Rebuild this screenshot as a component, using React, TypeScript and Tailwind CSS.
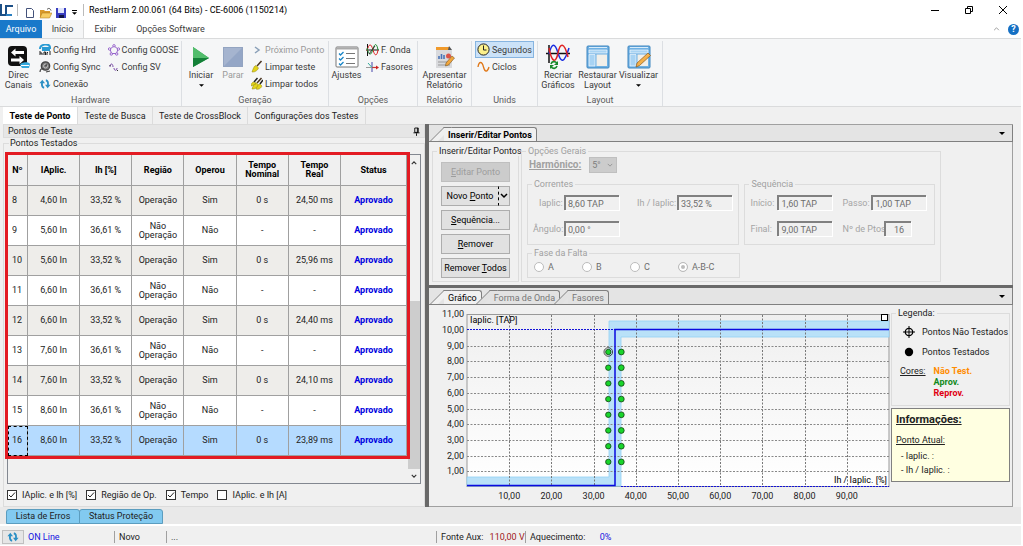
import { useState } from "react";
import type { ReactNode } from "react";
import clsx from "clsx";

const rows = [
  { n: 8, i: "4,60 In", op: true, t: "24,50 ms" },
  { n: 9, i: "5,60 In", op: false, t: "-" },
  { n: 10, i: "5,60 In", op: true, t: "25,96 ms" },
  { n: 11, i: "6,60 In", op: false, t: "-" },
  { n: 12, i: "6,60 In", op: true, t: "24,40 ms" },
  { n: 13, i: "7,60 In", op: false, t: "-" },
  { n: 14, i: "7,60 In", op: true, t: "24,10 ms" },
  { n: 15, i: "8,60 In", op: false, t: "-" },
  { n: 16, i: "8,60 In", op: true, t: "23,89 ms" },
];

function Caret({ className = "w-[5px]" }: { className?: string }) {
  return (
    <svg viewBox="0 0 8 4" className={clsx("h-[3px]", className)}>
      <path d="M0 0h8L4 4z" fill="#000" />
    </svg>
  );
}

/* ---------- Ícones ---------- */

function SyncArrows({ className }: { className?: string }) {
  return (
    <svg viewBox="0 0 14 12" className={className} fill="none" stroke="#2b8fc4" strokeWidth="2.200">
      <path d="M6 10.500C3 10 3 7 3.500 3.500" />
      <path d="M.3 5.200 3.800 1 7 5z" fill="#2b8fc4" stroke="none" />
      <path d="M8 1.500C11 2 11 5 10.500 8.500" />
      <path d="M13.700 6.800 10.200 11 7 7z" fill="#2b8fc4" stroke="none" />
    </svg>
  );
}

function DirecIcon() {
  return (
    <svg viewBox="0 0 24 24" className="w-6 h-6">
      <rect x="1" y="1" width="19" height="20" rx="4" fill="#111" />
      <path d="M4 7.500 8.500 3.500V6H17v3H8.500v2.500zM17 15l-4.500 4v-2.500H4v-3h8.500V11z" fill="#fff" />
      <path d="M13 20c0-3 9-4 10-1l-1 4h-7z" fill="#35a8dc" />
      <path d="M14 20.500h8" stroke="#fff" strokeWidth="1" />
    </svg>
  );
}

function HrdIcon() {
  return (
    <svg viewBox="0 0 12 12" className="w-3 h-3" fill="none">
      <path d="M1 5c0-5 9-6 10-2v1H4v2h7" stroke="#2a9bd3" strokeWidth="2" />
      <path d="M1 7v4M1 9h2v2M5 11V8h1.500v3M8 11V8.500h1M11 7v4" stroke="#222" strokeWidth="1" />
    </svg>
  );
}

function ClockSyncIcon() {
  return (
    <svg viewBox="0 0 12 12" className="w-3 h-3" fill="none" stroke="#444">
      <circle cx="6.500" cy="5" r="4.200" fill="#777" strokeWidth="1.300" />
      <circle cx="6.500" cy="5" r="2" stroke="#ccc" strokeWidth=".8" />
      <path d="M1 11c0-3 2-4 4-3M6.500 5 8 3.500M7 11l4-1" strokeWidth="1.200" />
    </svg>
  );
}

function GooseIcon() {
  return (
    <svg viewBox="0 0 12 12" className="w-3 h-3" fill="none" stroke="#8b55c5" strokeWidth=".9">
      <path d="M6 2 10 5 8.500 9.500h-5L2 5z" />
      <circle cx="6" cy="1.800" r="1.200" fill="#fff" />
      <circle cx="10.400" cy="5" r="1.200" fill="#fff" />
      <circle cx="8.700" cy="10" r="1.200" fill="#fff" />
      <circle cx="3.300" cy="10" r="1.200" fill="#fff" />
      <circle cx="1.600" cy="5" r="1.200" fill="#fff" />
    </svg>
  );
}

function SvIcon() {
  return (
    <svg viewBox="0 0 12 12" className="w-3 h-3" fill="none" stroke="#7a4aa8" strokeWidth="1">
      <path d="M2 6c0-4 3-4 3 0M6 7c0 3 3 3 3 0" />
      <path d="M1.500 4.500h1M9 9.500h1" stroke="#333" />
    </svg>
  );
}

function PlayIcon() {
  return (
    <svg viewBox="0 0 20 22" className="w-5 h-[22px]">
      <path d="M2 1v20l16-9z" fill="#1f9a46" />
      <path d="M2 1v11h16z" fill="#52bd6c" />
      <path d="M2 21l16-9H2z" fill="#148038" />
    </svg>
  );
}

function StopIcon() {
  return (
    <svg viewBox="0 0 20 22" className="w-5 h-[22px]">
      <rect x=".5" y="1.500" width="19" height="19" fill="#a5b4cf" stroke="#93a4c1" />
      <path d="M1 20 19 2v18z" fill="#94a6c6" />
    </svg>
  );
}

function BroomIcon({ twice = false }: { twice?: boolean }) {
  return (
    <svg viewBox="0 0 12 13" className="w-3 h-[13px]" fill="none">
      <path d="M6 6 10.500 1" stroke="#4a3420" strokeWidth="1.500" />
      <path d="M1 12c1-3 2-6 4-6.500L7.500 8C7 10 4 12.500 1 12z" fill="#e3d31a" stroke="#8e8510" strokeWidth=".5" />
      {twice && (
        <>
          <path d="M3 5 6.500 1M9 7l3-4" stroke="#222" strokeWidth="1.500" />
          <path d="M0 9c0-2 1-4 3-4l2 2zM5 12c1-2 2-5 4-5l2 2c-1 2-3 4-6 3z" fill="#e3d31a" stroke="#8e8510" strokeWidth=".5" />
        </>
      )}
    </svg>
  );
}

function AjustesIcon() {
  return (
    <svg viewBox="0 0 24 22" className="w-6 h-[22px]" fill="none">
      <rect x="1" y="1" width="22" height="20" rx="1" fill="#fff" stroke="#777" />
      <path d="M1 2.500h22" stroke="#aaa" strokeWidth="2" />
      <path d="M11 7.500h9M11 12.500h9M11 17.500h9" stroke="#777" strokeWidth="1.200" />
      <path d="m4 7.500 1.500 1.500 3-3M4 12.500l1.500 1.500 3-3M4 17.500 5.500 19l3-3" stroke="#1a86c8" strokeWidth="1.300" />
    </svg>
  );
}

function OndaIcon() {
  return (
    <svg viewBox="0 0 13 12" className="w-[13px] h-3" fill="none" strokeWidth="1">
      <path d="M1.500 0v12M0 6h13" stroke="#111" />
      <path d="M1 7C3-1 5-1 7 6s4 6 5 0" stroke="#d22" />
      <path d="M1 4c2 8 4 8 6 1s4-5 5 1" stroke="#1b8a2c" />
      <path d="M3 10 9 2" stroke="#333" />
    </svg>
  );
}

function FasoresIcon() {
  return (
    <svg viewBox="0 0 13 12" className="w-[13px] h-3" fill="none">
      <path d="M6 11V1" stroke="#44a" />
      <path d="M0 6.500h11" stroke="#999" />
      <path d="M6 6.500h5" stroke="#c33" strokeWidth="1.200" />
      <path d="M10 4.500 13 6.500l-3 2z" fill="#c22" />
      <path d="M6 6.500 2 2" stroke="#3a9" />
    </svg>
  );
}

function ReportIcon() {
  return (
    <svg viewBox="0 0 22 24" className="w-[22px] h-6" fill="none">
      <path d="M2 2h14l2 3v18H2z" fill="#d9dadd" />
      <path d="M2 2h14v3H2z" fill="#f09a2c" />
      <path d="M15 1l3 4h-4z" fill="#555" />
      <path d="M5 14v-3M7.500 14V9M10 14v-4" stroke="#4a74b8" strokeWidth="1.600" />
      <circle cx="14.500" cy="11" r="2.500" fill="#db5449" />
      <path d="M4 17h10M4 20h12" stroke="#999" />
      <path d="m12 18 6-7 2.500 2-6 7-3 1z" fill="#f2a63b" stroke="#7b5520" strokeWidth=".6" />
    </svg>
  );
}

function RecriarIcon() {
  return (
    <svg viewBox="0 0 26 26" className="w-[26px] h-[26px]" fill="none">
      <path d="M4 1v18M1 9.500h24" stroke="#111" strokeWidth="1.500" />
      <path d="M4 10C7-2 10-1 13 9s6 11 11-5" stroke="#1a2ee0" strokeWidth="1.500" />
      <path d="M4 4c3 16 7 15 9 5s6-12 10 4" stroke="#e02323" strokeWidth="1.500" />
      <path d="M6 20c1-3 4-3 6-1M12 22c-1 3-4 3-6 1" stroke="#1b8a2c" strokeWidth="1.600" />
      <path d="M13 17v4h-4zM5 25v-4h4z" fill="#1b8a2c" />
    </svg>
  );
}

function LayoutIcon({ pencil = false }: { pencil?: boolean }) {
  return (
    <svg viewBox="0 0 24 24" className="w-6 h-6" fill="none">
      <rect x="1" y="1" width="22" height="22" rx="1" fill="#6fb1e4" stroke="#3f86bf" />
      <path d="M3 2.500h18" stroke="#d8ecfa" />
      <path d="M3 5h18v3H3zM3 9.500h6V21H3z" fill="#a8d3f3" stroke="#fff" strokeWidth=".6" />
      <path d="M10.500 9.500H21V21H10.500z" fill="#f2efe9" />
      {pencil && <path d="m9 22 1-4L21 8l2.500 2.500-11 10z" fill="#f3b04a" stroke="#8a5a1e" strokeWidth=".7" />}
    </svg>
  );
}

function SegundosIcon() {
  return (
    <svg viewBox="0 0 13 13" className="w-[13px] h-[13px]" fill="none">
      <circle cx="6.500" cy="6.500" r="5.600" fill="#fbf08b" stroke="#222" />
      <path d="M6.500 2.500v4.500h3" stroke="#222" />
    </svg>
  );
}

function CiclosIcon() {
  return (
    <svg viewBox="0 0 13 13" className="w-[13px] h-[13px]" fill="none">
      <path d="M1 7c1-6 4-6 5.500 0s4 5 5.500 0" stroke="#e07818" strokeWidth="1.300" />
    </svg>
  );
}

/* ---------- Faixa de opções ---------- */

function RibbonGroup({ label, className, children }: { label: string; className: string; children: ReactNode }) {
  return (
    <section className={clsx("flex flex-col shrink-0 border-r border-[#dcdfe3]", className)}>
      <div className="flex flex-1 items-start">{children}</div>
      <div className="text-center leading-3 text-[#5c5c5c]">{label}</div>
    </section>
  );
}

function BigButton({ icon, lines, caret, disabled, className }: {
  icon: ReactNode;
  lines: string[];
  caret?: boolean;
  disabled?: boolean;
  className: string;
}) {
  return (
    <button disabled={disabled} className={clsx("flex flex-col items-center pt-[3px] leading-[10px]", disabled && "text-[#9a9a9a]", className)}>
      <span className="flex h-[26px] items-center">{icon}</span>
      {lines.map((l) => (
        <span key={l} className="whitespace-nowrap">{l}</span>
      ))}
      {caret && <Caret className="mt-1 w-[5px]" />}
    </button>
  );
}

function SmallButton({ icon, label, disabled, active }: { icon: ReactNode; label: string; disabled?: boolean; active?: boolean }) {
  return (
    <button
      disabled={disabled}
      className={clsx(
        "flex h-[17px] items-center gap-[2px] whitespace-nowrap border px-px",
        active ? "border-[#86b4e0] bg-[#cbe2f8]" : "border-transparent",
        disabled && "text-[#9a9a9a]",
      )}
    >
      {icon}
      {label}
    </button>
  );
}

function Ribbon() {
  return (
    <div className="flex h-[69px] border-y border-[#dadbdc] bg-[#f5f6f7] pt-[2px] text-[#3b3b3b]">
      <RibbonGroup label="Hardware" className="w-[182px]">
        <BigButton icon={<DirecIcon />} lines={["Direc", "Canais"]} className="w-[37px]" />
        <div>
          <SmallButton icon={<HrdIcon />} label="Config Hrd" />
          <SmallButton icon={<ClockSyncIcon />} label="Config Sync" />
          <SmallButton icon={<SyncArrows className="w-3 h-[10px]" />} label="Conexão" />
        </div>
        <div className="pl-[3px]">
          <SmallButton icon={<GooseIcon />} label="Config GOOSE" />
          <SmallButton icon={<SvIcon />} label="Config SV" />
        </div>
      </RibbonGroup>
      <RibbonGroup label="Geração" className="w-[147px]">
        <BigButton icon={<PlayIcon />} lines={["Iniciar"]} caret className="ml-[3px] w-8" />
        <BigButton icon={<StopIcon />} lines={["Parar"]} disabled className="w-8" />
        <div>
          <SmallButton
            disabled
            icon={
              <svg viewBox="0 0 12 12" className="w-3 h-3" fill="none" stroke="#8aa0b8" strokeWidth="1.500">
                <path d="m4 3 4 3-4 3" />
              </svg>
            }
            label="Próximo Ponto"
          />
          <SmallButton icon={<BroomIcon />} label="Limpar teste" />
          <SmallButton icon={<BroomIcon twice />} label="Limpar todos" />
        </div>
      </RibbonGroup>
      <RibbonGroup label="Opções" className="w-[89px]">
        <BigButton icon={<AjustesIcon />} lines={["Ajustes"]} className="w-[35px]" />
        <div>
          <SmallButton icon={<OndaIcon />} label="F. Onda" />
          <SmallButton icon={<FasoresIcon />} label="Fasores" />
        </div>
      </RibbonGroup>
      <RibbonGroup label="Relatório" className="w-[54px]">
        <BigButton icon={<ReportIcon />} lines={["Apresentar", "Relatório"]} className="w-full" />
      </RibbonGroup>
      <RibbonGroup label="Unids" className="w-[66px]">
        <div className="pl-[3px]">
          <SmallButton active icon={<SegundosIcon />} label="Segundos" />
          <SmallButton icon={<CiclosIcon />} label="Ciclos" />
        </div>
      </RibbonGroup>
      <RibbonGroup label="Layout" className="w-[125px]">
        <BigButton icon={<RecriarIcon />} lines={["Recriar", "Gráficos"]} className="w-[40px]" />
        <BigButton icon={<LayoutIcon />} lines={["Restaurar", "Layout"]} className="w-[39px]" />
        <BigButton icon={<LayoutIcon pencil />} lines={["Visualizar"]} caret className="w-[43px]" />
      </RibbonGroup>
    </div>
  );
}

function TitleBar() {
  return (
    <header className="flex h-5 items-center bg-white text-black">
      <svg viewBox="0 0 14 16" className="w-[14px] h-4" fill="none" stroke="#1c4f86" strokeWidth="2">
        <path d="M1 2v11h5V4h7" />
        <path d="M6 13h6" stroke="#2a7fc0" />
      </svg>
      <span className="ml-[3px] h-3 w-px bg-[#bbb]" />
      <div className="flex items-center gap-[3px] pl-[6px] pt-[5px]">
        <button aria-label="Novo">
          <svg viewBox="0 0 12 12" className="w-3 h-3">
            <path d="M2.500 1.500h5l2 2v7h-7z" fill="#fff" stroke="#44527a" />
          </svg>
        </button>
        <button aria-label="Abrir">
          <svg viewBox="0 0 13 12" className="w-[13px] h-3">
            <path d="M1 3h4l1 1h5v6H1z" fill="#d99a2b" />
            <path d="M3 6h10l-2.500 5H1z" fill="#f7cd62" stroke="#a87416" strokeWidth=".5" />
            <path d="M8 2.500c2-2 3-1 4 1" fill="none" stroke="#444" />
          </svg>
        </button>
        <button aria-label="Salvar">
          <svg viewBox="0 0 12 12" className="w-3 h-3">
            <path d="M1 1h10v10H1z" fill="#3a3fc0" />
            <path d="M3 1h6v5H3z" fill="#dfe4fb" />
            <path d="M4 8h5v3H4z" fill="#111548" />
          </svg>
        </button>
        <button aria-label="Personalizar" className="flex flex-col items-center gap-px px-[2px]">
          <span className="h-px w-[5px] bg-black" />
          <Caret />
        </button>
      </div>
      <span className="ml-1 h-3 w-px bg-[#bbb]" />
      <h1 className="ml-[5px] whitespace-nowrap">RestHarm 2.00.061 (64 Bits) - CE-6006 (1150214)</h1>
      <div className="ml-auto flex items-center gap-[26px] pr-[14px]">
        <button aria-label="Minimizar">
          <svg viewBox="0 0 8 8" className="size-2" stroke="#000" fill="none"><path d="M0 4.500h8" /></svg>
        </button>
        <button aria-label="Restaurar">
          <svg viewBox="0 0 8 8" className="size-2" stroke="#000" fill="none"><path d="M.5 2.500h5v5h-5zM2.500 2V.5h5v5H6" /></svg>
        </button>
        <button aria-label="Fechar">
          <svg viewBox="0 0 8 8" className="size-2" stroke="#000" fill="none"><path d="m0 0 8 8M8 0 0 8" /></svg>
        </button>
      </div>
    </header>
  );
}

/* ---------- Painel esquerdo ---------- */

function Check({ label, defaultChecked = false }: { label: string; defaultChecked?: boolean }) {
  return (
    <label className="flex items-center gap-[5px] whitespace-nowrap">
      <span className="relative flex">
        <input type="checkbox" defaultChecked={defaultChecked} className="peer size-[10px] appearance-none border border-[#333] bg-white" />
        <svg viewBox="0 0 10 10" className="pointer-events-none absolute inset-0 hidden peer-checked:block" fill="none" stroke="#222">
          <path d="m2 5 2 2 4-4.500" />
        </svg>
      </span>
      {label}
    </label>
  );
}

function PointsTable() {
  const cell = "border-b border-r border-[#a0a0a0] p-0 leading-[9px]";
  return (
    <div className="relative min-w-0 flex-1 self-start">
      <table className="w-full table-fixed border-separate border-spacing-0 text-center">
        <colgroup>
          <col className="w-5" />
          <col /><col /><col /><col /><col /><col />
          <col className="w-[66px]" />
        </colgroup>
        <thead>
          <tr className="h-[31px] bg-[#f0f0f0] text-black">
            <th className={cell}>Nº</th>
            <th className={cell}>IAplic.</th>
            <th className={cell}>Ih [%]</th>
            <th className={cell}>Região</th>
            <th className={cell}>Operou</th>
            <th className={cell}>Tempo<br />Nominal</th>
            <th className={cell}>Tempo<br />Real</th>
            <th className={cell}>Status</th>
          </tr>
        </thead>
        <tbody>
          {rows.map((r) => (
            <tr key={r.n} className={clsx("h-[30px]", r.n === 16 ? "bg-[#b5dbff]" : r.op ? "bg-[#eeedea]" : "bg-white")}>
              <td className={clsx(cell, "pl-1 text-left", r.n === 16 && "outline-1 -outline-offset-1 outline-dashed outline-black")}>{r.n}</td>
              <td className={cell}>{r.i}</td>
              <td className={cell}>{r.op ? "33,52 %" : "36,61 %"}</td>
              <td className={cell}>{r.op ? "Operação" : <>Não<br />Operação</>}</td>
              <td className={cell}>{r.op ? "Sim" : "Não"}</td>
              <td className={cell}>{r.op ? "0 s" : "-"}</td>
              <td className={cell}>{r.t}</td>
              <td className={clsx(cell, "font-bold text-[#0000e0]")}>Aprovado</td>
            </tr>
          ))}
        </tbody>
      </table>
      <div className="pointer-events-none absolute -inset-[3px] border-[3px] border-[#e31b23]" />
    </div>
  );
}

function LeftPanel() {
  return (
    <section className="flex min-w-0 flex-col pl-[3px]">
      <div className="flex h-[14px] items-center justify-between border border-[#dcdcdc] bg-[#e6e6e6] px-1">
        <h2>Pontos de Teste</h2>
        <svg viewBox="0 0 8 10" className="h-[9px] w-[7px]" fill="none" stroke="#000">
          <path d="M2 1h4v5H2zM5 1v5M.5 6.500h7M4 7v3" />
        </svg>
      </div>
      <fieldset className="flex min-w-0 flex-1 flex-col border border-[#dcdcdc] px-[3px]">
        <legend className="ml-[2px] px-px leading-[10px]">Pontos Testados</legend>
        <div className="mt-[6px] flex h-[330px] border border-[#828790]">
          <PointsTable />
          <div className="ml-[1px] flex w-3 flex-col items-center justify-between bg-[#f0f0f0]">
            <button aria-label="Rolar para cima" className="flex h-4 items-center">
              <svg viewBox="0 0 8 5" className="w-[6px] h-1" fill="none" stroke="#333" strokeWidth="1.500"><path d="m1 4 3-3 3 3" /></svg>
            </button>
            <div className="mt-auto h-[168px] w-full bg-[#cdcdcd]" />
            <button aria-label="Rolar para baixo" className="flex h-[14px] items-center">
              <svg viewBox="0 0 8 5" className="w-[6px] h-1" fill="none" stroke="#333" strokeWidth="1.500"><path d="m1 1 3 3 3-3" /></svg>
            </button>
          </div>
        </div>
        <div className="flex h-[22px] items-center gap-[9px]">
          <Check label="IAplic. e Ih [%]" defaultChecked />
          <Check label="Região de Op." defaultChecked />
          <Check label="Tempo" defaultChecked />
          <Check label="IAplic. e Ih [A]" />
        </div>
      </fieldset>
    </section>
  );
}

/* ---------- Painel direito ---------- */

function DockTab({ children, active, className }: { children: ReactNode; active?: boolean; className?: string }) {
  return (
    <button
      className={clsx(
        "relative h-[14px] whitespace-nowrap rounded-tr-[3px] border-r border-t border-[#808080] px-1 leading-3",
        "before:absolute before:-left-[7px] before:-top-px before:h-[14px] before:w-2 before:-skew-x-45 before:border-l before:border-t before:border-[#808080]",
        active ? "bg-[#f0f0f0] text-black before:bg-[#f0f0f0]" : "bg-[#e2e2e2] text-[#777] before:bg-[#e2e2e2]",
        className,
      )}
    >
      <span className="relative">{children}</span>
    </button>
  );
}

function DockStrip({ children }: { children: ReactNode }) {
  return (
    <div className="flex h-[17px] items-end border-b border-r border-[#808080] bg-[#e4e4e4] pl-[15px] pr-[7px]">
      {children}
      <button aria-label="Janelas" className="ml-auto flex h-4 items-center">
        <Caret className="w-[6px]" />
      </button>
    </div>
  );
}

function Group({ title, titleClass, className, children }: { title: string; titleClass?: string; className?: string; children: ReactNode }) {
  return (
    <fieldset className={clsx("min-w-0 border border-[#dcdcdc]", className)}>
      <legend className={clsx("ml-1 whitespace-nowrap px-[2px] leading-[10px]", titleClass)}>{title}</legend>
      {children}
    </fieldset>
  );
}

function Field({ id, label, value, labelWidth, width = "w-[55px]" }: {
  id: string;
  label: string;
  value: string;
  labelWidth: string;
  width?: string;
}) {
  return (
    <div className="flex items-center">
      <label htmlFor={id} className={clsx("whitespace-nowrap text-[#a5a5a5]", labelWidth)}>{label}</label>
      <input
        id={id}
        disabled
        defaultValue={value}
        className={clsx("h-[15px] border-l-2 border-t-2 border-[#808080] bg-[#f0f0f0] px-[2px] text-[#6d6d6d] shadow-[1px_1px_0_#fff]", width)}
      />
    </div>
  );
}

function EditPanel() {
  const btn = "h-5 w-full border border-[#adadad] bg-[#e1e1e1] text-black";
  return (
    <div className="flex gap-[2px] border-r border-[#a0a0a0] pb-[3px] pl-[3px] pt-1">
      <Group title="Inserir/Editar Pontos" className="w-[87px] shrink-0 pb-[3px]">
        <div className="flex flex-col gap-1 px-2 pt-[6px]">
          <button disabled className="h-5 w-full border border-[#bfbfbf] bg-[#cccccc] text-[#9d9d9d]"><u>E</u>ditar Ponto</button>
          <div className="flex">
            <button className={clsx(btn, "min-w-0 border-r-0")}>Novo <u>P</u>onto</button>
            <button aria-label="Mais opções" className="flex h-5 w-3 shrink-0 items-center justify-center border border-[#adadad] border-l-black bg-[#e1e1e1] [border-left-style:dashed]">
              <svg viewBox="0 0 8 6" className="w-2 h-[6px]" fill="none" stroke="#000" strokeWidth="1.500"><path d="m1 1 3 3 3-3" /></svg>
            </button>
          </div>
          <button className={btn}><u>S</u>equência...</button>
          <button className={btn}><u>R</u>emover</button>
          <button className={clsx(btn, "whitespace-nowrap")}>Remover <u>T</u>odos</button>
        </div>
      </Group>
      <Group title="Opções Gerais" className="w-[420px] text-[#a0a0a0]">
        <div className="px-[5px] pt-px">
          <div className="flex items-center gap-2 pl-[2px]">
            <label htmlFor="harm" className="text-[10px] font-bold underline">Harmônico:</label>
            <span className="relative">
              <select id="harm" disabled className="block h-4 w-7 appearance-none border border-[#bfbfbf] bg-[#cccccc] pl-[2px] text-[#7d7d7d]">
                <option>5°</option>
              </select>
              <svg viewBox="0 0 8 5" className="pointer-events-none absolute right-1 top-[6px] w-[6px] h-1" fill="none" stroke="#888"><path d="m1 1 3 3 3-3" /></svg>
            </span>
          </div>
          <div className="flex gap-[5px] pt-[6px]">
            <Group title="Correntes" className="h-[66px] w-[213px]">
              <div className="flex flex-col gap-[11px] pl-[5px] pt-[6px]">
                <div className="flex gap-[18px]">
                  <Field id="iaplic" label="Iaplic:" value="8,60 TAP" labelWidth="w-[31px] pl-[6px]" />
                  <Field id="ih" label="Ih / Iaplic:" value="33,52 %" labelWidth="w-10" />
                </div>
                <Field id="ang" label="Ângulo:" value="0,00 °" labelWidth="w-[31px]" />
              </div>
            </Group>
            <Group title="Sequência" className="h-[66px] w-[191px]">
              <div className="flex flex-col gap-[11px] pl-[5px] pt-[6px]">
                <div className="flex gap-[10px]">
                  <Field id="ini" label="Início:" value="1,60 TAP" labelWidth="w-[27px]" />
                  <Field id="passo" label="Passo:" value="1,00 TAP" labelWidth="w-[29px]" />
                </div>
                <div className="flex gap-[10px]">
                  <Field id="fim" label="Final:" value="9,00 TAP" labelWidth="w-[27px]" />
                  <Field id="ptos" label="Nº de Ptos:" value="16" labelWidth="w-[42px]" width="w-[27px] text-center" />
                </div>
              </div>
            </Group>
          </div>
          <Group title="Fase da Falta" className="mt-[3px] h-[30px] w-[213px]">
            <div className="flex pl-[6px] pt-[3px] text-[#6d6d6d]">
              {["A", "B", "C", "A-B-C"].map((f) => (
                <label key={f} className="flex w-12 shrink-0 items-center gap-1 whitespace-nowrap leading-3">
                  <input
                    type="radio"
                    name="fase"
                    disabled
                    defaultChecked={f === "A-B-C"}
                    className="size-[10px] appearance-none rounded-full border border-[#bcbcbc] bg-white checked:bg-[#bcbcbc] checked:shadow-[inset_0_0_0_2px_#fff]"
                  />
                  {f}
                </label>
              ))}
            </div>
          </Group>
        </div>
      </Group>
    </div>
  );
}

const X0 = 34;
const Y0 = 179;
const DX = 42.2;
const DY = 15.7;

function Chart() {
  const xs = [1, 2, 3, 4, 5, 6, 7, 8, 9];
  const ys = [1, 2, 3, 4, 5, 6, 7, 8, 9, 10, 11];
  const pts = [1.6, 2.6, 3.6, 4.6, 5.6, 6.6, 7.6, 8.6];
  return (
    <svg viewBox="0 0 458 196" className="h-auto w-full text-[9px]" fill="#222">
      <defs>
        <linearGradient id="plot" x1="0" y1="0" x2="0" y2="1">
          <stop offset="0" stopColor="#efefef" />
          <stop offset="1" stopColor="#fff" />
        </linearGradient>
      </defs>
      <rect x={X0} y="6.500" width="422" height="172" fill="url(#plot)" stroke="#999" />
      <path d="M34 169H176V13H456V29H188V178H34z" fill="#b9e1f8" stroke="#93d2f5" strokeWidth=".8" />
      {xs.map((v) => (
        <g key={v}>
          <path d={`M${Math.round(X0 + v * DX)}.5 7V178`} stroke="#777" strokeDasharray="2 1.500" />
          <text x={X0 + v * DX} y="191" textAnchor="middle">{v * 10},00</text>
        </g>
      ))}
      {ys.map((v) => (
        <g key={v}>
          {v < 10 && <path d={`M34 ${Math.round(Y0 - v * DY)}.5H456`} stroke="#888" strokeDasharray="2 1.500" />}
          <text x="31" y={Y0 - v * DY + 3} textAnchor="end">{v},00</text>
        </g>
      ))}
      <path d="M34 21.500H182M188 178.500H456" stroke="#1212d8" strokeDasharray="2 1" />
      <path d="M34 177.500H182V21.500H456" fill="none" stroke="#0a0ae0" strokeWidth="1.500" />
      {pts.map((v) => (
        <g key={v} fill="#19d52b" stroke="#123d12" strokeWidth=".8">
          <circle cx="175.300" cy={Y0 - v * DY} r="2.700" />
          <circle cx="188.300" cy={Y0 - v * DY} r="2.900" />
        </g>
      ))}
      <circle cx="175.300" cy={Y0 - 8.6 * DY} r="4.300" fill="none" stroke="#222" strokeWidth=".8" />
      <text x="37" y="15" fill="#000">Iaplic. [TAP]</text>
      <text x="454" y="175" textAnchor="end" fill="#000">Ih / Iaplic. [%]</text>
      <rect x="448.500" y="6.500" width="6" height="6" fill="#fff" stroke="#000" />
    </svg>
  );
}

function GraphPanel() {
  return (
    <div className="flex flex-1 items-start border-b border-r border-[#a0a0a0] pl-1 pr-[2px] pt-[3px]">
      <div className="min-w-0 flex-1"><Chart /></div>
      <aside className="flex w-[119px] shrink-0 flex-col gap-[2px]">
        <Group title="Legenda:" className="h-[98px]">
          <ul className="flex flex-col gap-2 pl-[11px] pt-2">
            <li className="flex h-3 items-center gap-[7px] whitespace-nowrap">
              <svg viewBox="0 0 12 12" className="size-3" fill="none" stroke="#000"><circle cx="6" cy="6" r="3.700" strokeWidth="1.300" /><path d="M6 0v12M0 6h12" /></svg>
              Pontos Não Testados
            </li>
            <li className="flex h-3 items-center gap-[7px] whitespace-nowrap">
              <svg viewBox="0 0 12 12" className="size-3"><circle cx="6" cy="6" r="4.200" fill="#000" /></svg>
              Pontos Testados
            </li>
          </ul>
          <div className="flex gap-2 pl-2 pt-2 leading-[11px]">
            <u>Cores:</u>
            <div className="font-bold">
              <div className="text-[#ff8c00]">Não Test.</div>
              <div className="text-[#128a1c]">Aprov.</div>
              <div className="text-[#e00012]">Reprov.</div>
            </div>
          </div>
        </Group>
        <div className="h-[74px] border border-[#808080] bg-[#ffffe1] px-1 pt-[5px]">
          <h3 className="text-[11px] font-bold leading-3 underline">Informações:</h3>
          <p className="pt-2 leading-3 underline">Ponto Atual:</p>
          <p className="pl-[5px] pt-1 leading-3">- Iaplic. :</p>
          <p className="pl-[5px] pt-[2px] leading-3">- Ih / Iaplic. :</p>
        </div>
      </aside>
    </div>
  );
}

export default function App() {
  const [tab, setTab] = useState("Teste de Ponto");
  const tabs = ["Teste de Ponto", "Teste de Busca", "Teste de CrossBlock", "Configurações dos Testes"];
  return (
    <div className="flex min-h-screen flex-col bg-white pr-[2px] font-[Roboto,'Liberation_Sans',sans-serif] text-[9px] leading-3 text-[#222]">
      <TitleBar />
      <nav className="flex h-[18px] items-stretch bg-white text-[#3b3b3b]">
        <button className="w-[42px] bg-[#1979ca] text-white">Arquivo</button>
        <button className="w-[42px] border-r border-[#dadbdc] bg-[#f5f6f7]">Início</button>
        <button className="w-[43px]">Exibir</button>
        <button className="w-[87px]">Opções Software</button>
        <div className="ml-auto flex items-center gap-2 pr-[2px]">
          <button aria-label="Recolher">
            <svg viewBox="0 0 8 5" className="w-[7px] h-1" fill="none" stroke="#888"><path d="m1 4 3-3 3 3" /></svg>
          </button>
          <button aria-label="Ajuda" className="size-[11px] rounded-full bg-[#1570c4] font-bold leading-[11px] text-white">?</button>
        </div>
      </nav>
      <Ribbon />

      <main className="flex flex-1 flex-col bg-[#f0f0f0]">
        <nav className="flex h-[17px] items-stretch pl-[3px]">
          {tabs.map((t) => (
            <button
              key={t}
              onClick={() => setTab(t)}
              className={clsx(
                "whitespace-nowrap border-r border-[#dcdcdc]",
                t === tabs[0] ? "w-[75px]" : t === tabs[1] ? "w-[75px]" : t === tabs[2] ? "w-[95px]" : "w-[118px]",
                t === tab && "bg-white font-bold text-black",
              )}
            >
              {t}
            </button>
          ))}
        </nav>

        <div className="grid flex-1 grid-cols-[minmax(0,425fr)_4px_minmax(0,584fr)] pr-2">
          <LeftPanel />
          <div className="bg-[#696969]" />
          <section className="flex min-w-0 flex-col border-t border-[#a0a0a0]">
            <DockStrip>
              <DockTab active className="font-bold">Inserir/Editar Pontos</DockTab>
            </DockStrip>
            <EditPanel />
            <div className="h-[3px] bg-[#696969]" />
            <DockStrip>
              <DockTab active>Gráfico</DockTab>
              <DockTab className="ml-2">Forma de Onda</DockTab>
              <DockTab className="ml-2">Fasores</DockTab>
            </DockStrip>
            <GraphPanel />
          </section>
        </div>

        <div className="flex h-[19px] items-start border-b-2 border-white bg-[#e9e9e9] pl-[6px] pt-[2px]">
          <button className="h-[15px] w-[74px] rounded-t-[3px] border border-[#5b9dbf] bg-[#82caf0] leading-[13px]">Lista de Erros</button>
          <button className="-ml-px h-[15px] w-[84px] rounded-t-[3px] border border-[#5b9dbf] bg-[#82caf0] leading-[13px]">Status Proteção</button>
        </div>

        <footer className="flex h-[19px] items-center pl-[2px] pt-[2px]">
          <button aria-label="Reconectar" className="flex h-[14px] w-[22px] items-center justify-center border border-[#c0c0c0] bg-[#e6e6e6]">
            <SyncArrows className="w-3 h-[10px]" />
          </button>
          <span className="w-[90px] pl-1 text-[#1414e0]">ON Line</span>
          <span className="w-[52px] border-l border-[#a0a0a0] pl-1">Novo</span>
          <span className="w-[270px] border-l border-[#a0a0a0] pl-1">...</span>
          <span className="w-[89px] whitespace-nowrap border-l border-[#a0a0a0] pl-1">
            Fonte Aux: <span className="pl-1 text-[#a01818]">110,00 V</span>
          </span>
          <span className="whitespace-nowrap border-l border-[#a0a0a0] pl-1">
            Aquecimento: <span className="pl-3 text-[#1414e0]">0%</span>
          </span>
        </footer>
      </main>
      <div className="h-[2px]" />
    </div>
  );
}
